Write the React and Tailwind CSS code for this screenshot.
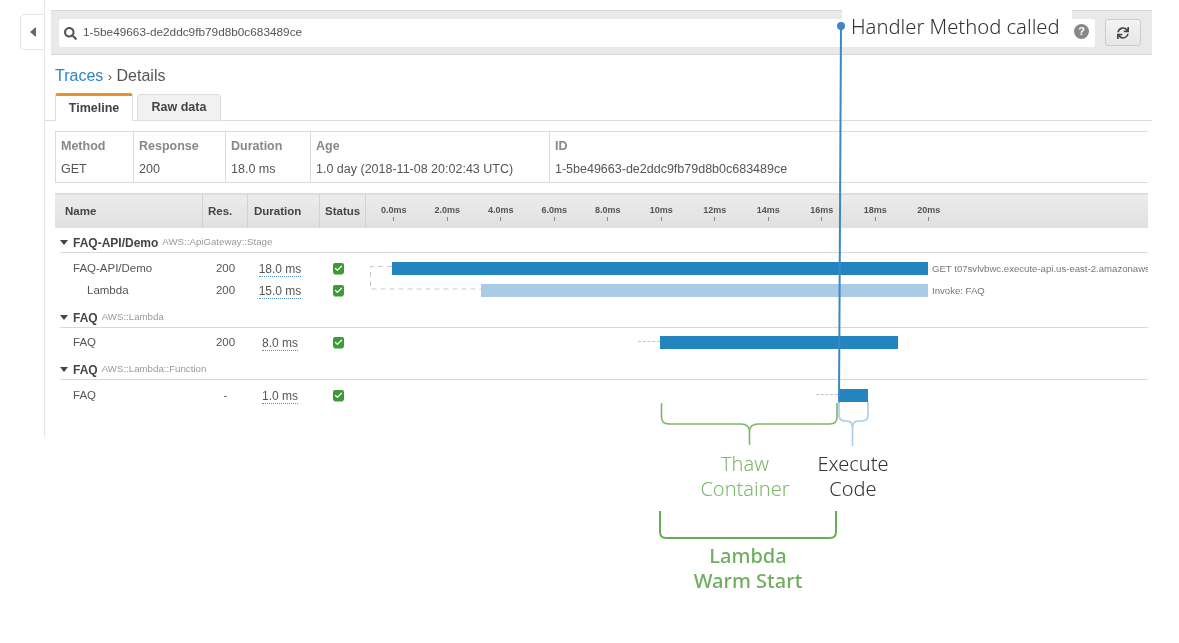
import React from 'react';
import { Check } from 'lucide-react';
import { FaSearch, FaSync } from 'react-icons/fa';

const ticks = ['0.0ms', '2.0ms', '4.0ms', '6.0ms', '8.0ms', '10ms', '12ms', '14ms', '16ms', '18ms', '20ms'];

const groups = [
  {
    name: 'FAQ-API/Demo',
    type: 'AWS::ApiGateway::Stage',
    pad: 'pt-[5px]',
    rows: [
      { name: 'FAQ-API/Demo', res: '200', dur: '18.0 ms', left: 26, width: 536, color: 'bg-[#2484bf]', note: 'GET t07svlvbwc.execute-api.us-east-2.amazonaws.com' },
      { name: 'Lambda', indent: true, res: '200', dur: '15.0 ms', left: 115, width: 447, color: 'bg-[#a9cce6]', note: 'Invoke: FAQ' },
    ],
  },
  {
    name: 'FAQ',
    type: 'AWS::Lambda',
    pad: 'pt-[4px]',
    rows: [{ name: 'FAQ', res: '200', dur: '8.0 ms', left: 294, width: 238, color: 'bg-[#2484bf]', dash: 22 }],
  },
  {
    name: 'FAQ',
    type: 'AWS::Lambda::Function',
    pad: 'pt-[5px]',
    rows: [{ name: 'FAQ', res: '-', dur: '1.0 ms', left: 472, width: 30, color: 'bg-[#2484bf]', dash: 22 }],
  },
];

const summary = [
  { label: 'Method', value: 'GET', w: 'w-[78px]' },
  { label: 'Response', value: '200', w: 'w-[92px]' },
  { label: 'Duration', value: '18.0 ms', w: 'w-[85px]' },
  { label: 'Age', value: '1.0 day (2018-11-08 20:02:43 UTC)', w: 'w-[239px]' },
  { label: 'ID', value: '1-5be49663-de2ddc9fb79d8b0c683489ce', w: 'flex-1' },
];

const StatusBox = () => (
  <span className="-mt-px flex h-[11px] w-[11px] items-center justify-center rounded-[2px] bg-[#3b9b35] shadow-[0_2px_0_-1px_#9ccb98]">
    <Check size={9} strokeWidth={3.5} className="text-white" />
  </span>
);

const TraceRow = ({ row }) => (
  <div className="flex h-[22px] items-center text-[11.5px] text-[#555]">
    <div className={`w-[148px] ${row.indent ? 'pl-[32px]' : 'pl-[18px]'}`}>{row.name}</div>
    <div className="w-[45px] text-center">{row.res}</div>
    <div className="flex w-[72px] justify-center pr-[8px]">
      <span className="border-b border-dotted border-[#4f94c9] text-[12px] leading-[14px]">{row.dur}</span>
    </div>
    <div className="flex w-[46px] justify-center pr-[9px]">
      <StatusBox />
    </div>
    <div className="relative h-full flex-1 overflow-hidden">
      {row.dash && (
        <div
          className="absolute top-[9px] border-t border-dashed border-[#c4c4c4]"
          style={{ left: row.left - row.dash, width: row.dash }}
        />
      )}
      <div className={`absolute top-[4px] h-[13px] ${row.color}`} style={{ left: row.left, width: row.width }} />
      {row.note && (
        <span
          className="absolute top-[4px] whitespace-nowrap text-[9.6px] leading-[13px] text-[#777]"
          style={{ left: row.left + row.width + 4 }}
        >
          {row.note}
        </span>
      )}
    </div>
  </div>
);

export default function App() {
  return (
    <div className="relative h-[643px] w-[1179px] overflow-hidden bg-white font-['Liberation_Sans',Arial,sans-serif] blur-[0.4px]">
      {/* console side rail */}
      <div className="flex">
        <div className="flex h-[437px] w-[45px] shrink-0 justify-end border-r border-[#e4e4e4] pt-[14px]">
          <div className="flex h-[36px] w-[24px] items-center justify-center rounded-l-[5px] border border-r-0 border-[#e6e6e6] bg-white">
            <span className="h-0 w-0 border-y-[5px] border-r-[6px] border-y-transparent border-r-[#666]" />
          </div>
        </div>

        <div className="w-[1107px] pt-[10px]">
          {/* search bar */}
          <div className="ml-[6px] flex h-[45px] items-center border-y border-[#d8d8d8] bg-[#e9e9e9] pl-[8px] pr-[11px]">
            <div className="flex h-[28px] flex-1 items-center gap-[6px] rounded-[3px] bg-white pl-[5px]">
              <FaSearch size={13} className="mt-px text-[#555]" />
              <span className="mt-px text-[11.8px] text-[#555]">1-5be49663-de2ddc9fb79d8b0c683489ce</span>
            </div>
            <div className="ml-[10px] flex h-[27px] w-[36px] items-center justify-center rounded-[3px] border border-[#ccc] bg-gradient-to-b from-[#f4f4f4] to-[#e6e6e6]">
              <FaSync size={12} className="text-[#444]" />
            </div>
          </div>

          <div className="ml-[10px] mt-[12px] text-[16px] leading-[18px] text-[#555]">
            <span className="text-[#2e83c5]">Traces</span> <span className="text-[13px]">›</span> Details
          </div>

          {/* tabs */}
          <div className="mt-[7px] flex h-[28px] items-end gap-[4px] border-b border-[#dcdcdc] pl-[10px] text-[12.5px] font-bold text-[#444]">
            <div className="-mb-px flex h-[28px] w-[78px] items-center justify-center rounded-t-[3px] border-x border-b border-x-[#ddd] border-b-white border-t-[3px] border-t-[#e8912d] bg-white">
              Timeline
            </div>
            <div className="-mb-px flex h-[27px] w-[84px] items-center justify-center rounded-t-[3px] border border-[#ddd] bg-[#f1f1f1]">
              Raw data
            </div>
          </div>

          {/* summary */}
          <div className="ml-[10px] mt-[10px] flex h-[52px] w-[1093px] border-y border-l border-[#dcdcdc] text-[12.5px]">
            {summary.map((s) => (
              <div key={s.label} className={`${s.w} flex flex-col gap-[9px] border-r border-[#dcdcdc] pl-[5px] pt-[7px] last:border-r-0`}>
                <div className="font-bold leading-[14px] text-[#888]">{s.label}</div>
                <div className="leading-[14px] text-[#555]">{s.value}</div>
              </div>
            ))}
          </div>

          {/* trace table */}
          <div className="ml-[10px] mt-[10px] w-[1093px]">
            <div className="flex h-[35px] items-center border-t-2 border-[#dedede] bg-gradient-to-b from-[#ececec] to-[#e0e0e0] text-[11.5px] font-bold text-[#444]">
              <div className="flex h-full w-[148px] items-center border-r border-[#d2d2d2] pl-[10px]">Name</div>
              <div className="flex h-full w-[45px] items-center border-r border-[#d2d2d2] pl-[5px]">Res.</div>
              <div className="flex h-full w-[72px] items-center border-r border-[#d2d2d2] pl-[6px]">Duration</div>
              <div className="flex h-full w-[46px] items-center border-r border-[#d2d2d2] pl-[5px]">Status</div>
              <div className="relative h-full flex-1">
                <div className="ml-px flex pt-[10px]">
                  {ticks.map((t) => (
                    <div key={t} className="flex w-[53.5px] flex-col items-center text-[9px] leading-[10px] text-[#555]">
                      {t}
                      <span className="mt-[2px] h-[4px] w-px bg-[#888]" />
                    </div>
                  ))}
                </div>
              </div>
            </div>

            <div className="pt-[7px]">
              {groups.map((g, i) => (
                <div key={i} className="mb-[8px]">
                  <div className="ml-[5px] flex h-[18px] items-center gap-[4px] border-b border-[#d9d9d9] pb-[2px] text-[12px] font-bold text-[#444]">
                    <span className="mr-px h-0 w-0 border-x-[4px] border-t-[5px] border-x-transparent border-t-[#444]" />
                    {g.name}
                    <span className="text-[9.7px] font-normal text-[#999]">{g.type}</span>
                  </div>
                  <div className={g.pad}>
                    {g.rows.map((r, j) => (
                      <TraceRow key={j} row={r} />
                    ))}
                  </div>
                </div>
              ))}
            </div>
          </div>
        </div>
      </div>

      {/* dashed connector for the API Gateway rows */}
      <svg className="absolute left-[366px] top-[262px]" width="120" height="32" fill="none" stroke="#c9c9c9" strokeDasharray="5 4">
        <path d="M26 4.5H4.5V27H115" />
      </svg>

      {/* annotations */}
      <div className="absolute left-[842px] top-[10px] flex h-[36px] w-[230px] items-start bg-white pl-[9px] pt-[2px] font-['Noto_Sans',sans-serif] text-[20.2px] font-light leading-[28px] text-[#333]">
        Handler Method called
      </div>
      <div className="absolute left-[1074px] top-[24px] flex h-[15px] w-[15px] items-center justify-center rounded-full bg-[#888] text-[11px] font-bold text-white">?</div>

      <svg className="absolute left-0 top-0" width="1179" height="643" fill="none">
        <circle cx="841" cy="26" r="4" fill="#3f86c8" />
        <path d="M841 26L839 403" stroke="#3f86c8" strokeWidth="2" />
        <path d="M661.5 403V417Q661.5 424 669 424H741Q749.5 424 749.5 432V445M749.5 432Q749.5 424 758 424H830Q837 424 837 417V403" stroke="#7cb66a" strokeWidth="1.6" />
        <path d="M839 402V415Q839 421 845 421H847Q852.5 421 852.5 428V446M852.5 428Q852.5 421 858 421H862Q868 421 868 415V402" stroke="#a9cce6" strokeWidth="1.6" />
        <path d="M660 511V532Q660 538 666 538H830Q836 538 836 532V511" stroke="#69ad56" strokeWidth="2" />
      </svg>

      <div className="absolute left-[690px] top-[451px] w-[110px] text-center font-['Noto_Sans',sans-serif] text-[20px] font-light leading-[25px] text-[#7db86c]">
        Thaw<br />Container
      </div>
      <div className="absolute left-[803px] top-[451px] w-[100px] text-center font-['Noto_Sans',sans-serif] text-[20px] font-light leading-[25px] text-[#333]">
        Execute<br />Code
      </div>
      <div className="absolute left-[688px] top-[543px] w-[120px] text-center font-['Noto_Sans',sans-serif] text-[20px] font-medium leading-[25px] text-[#6fae5d]">
        Lambda<br />Warm Start
      </div>
    </div>
  );
}
